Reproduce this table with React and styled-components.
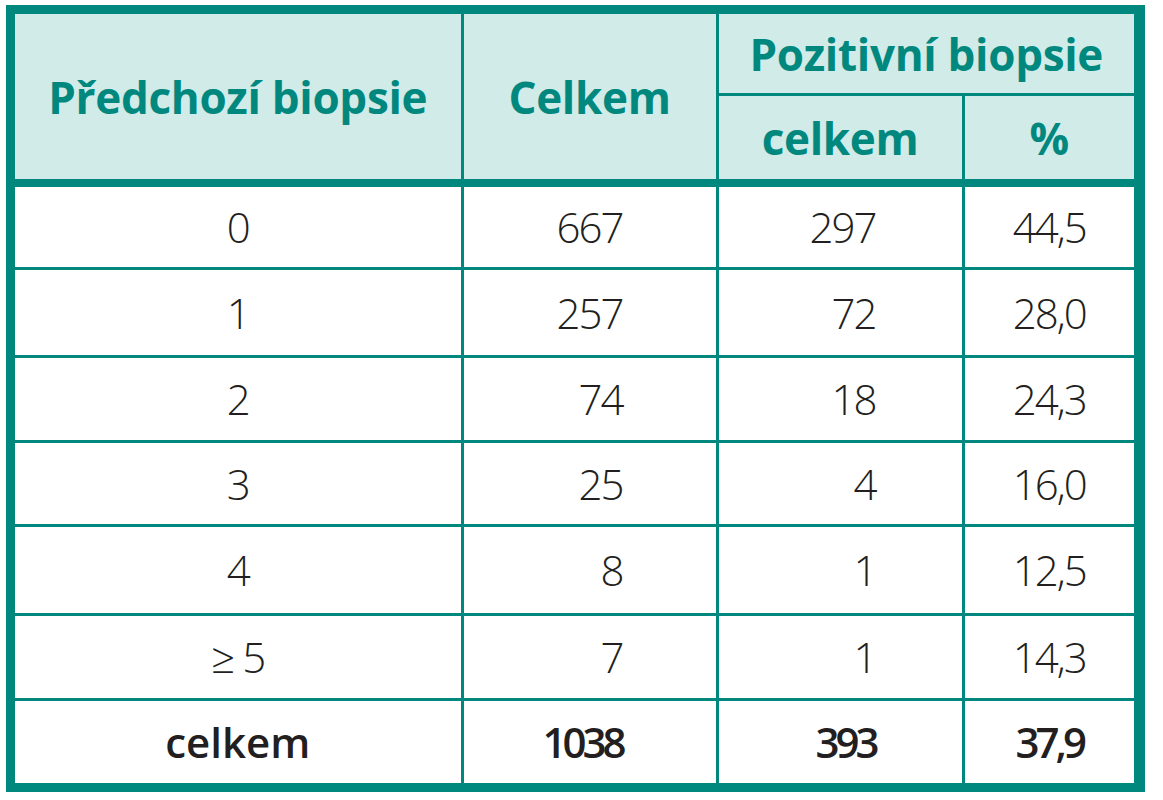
import styled, { createGlobalStyle } from 'styled-components';

const teal = '#00887f';
const tint = '#d0ebe8';
const ink = '#231f20';

const rows = [
  ['0', '667', '297', '44,5'],
  ['1', '257', '72', '28,0'],
  ['2', '74', '18', '24,3'],
  ['3', '25', '4', '16,0'],
  ['4', '8', '1', '12,5'],
  ['≥ 5', '7', '1', '14,3'],
];
// cell heights, collapsed half-borders are added on top of these
const rowHeights = [79.5, 85, 82, 81.5, 85.5, 82];

const GlobalStyle = createGlobalStyle`
  body {
    margin: 0;
    background: #fff;
    font-family: 'Open Sans', 'Liberation Sans', sans-serif;
  }
`;

const Frame = styled.div`
  box-sizing: content-box;
  width: 1119px;
  margin: 5px 0 0 6px;
  border: 9px solid ${teal};
  border-right-width: 11px;
`;

const Table = styled.table`
  width: 100%;
  table-layout: fixed;
  border-collapse: collapse;
  border-style: hidden;
`;

const Head = styled.th`
  background: ${tint};
  color: ${teal};
  font-weight: 700;
  font-size: 44px;
  letter-spacing: -0.3px;
  text-align: center;
  padding: 0;
  border: 3px solid ${teal};
  border-bottom-width: ${(p) => (p.last ? '8px' : '3px')};
  height: ${(p) => p.h}px;
`;

const Cell = styled.td`
  color: ${ink};
  font-size: 42px;
  font-weight: ${(p) => (p.bold ? 600 : 300)};
  letter-spacing: ${(p) => (p.word ? '0' : p.bold ? '-4px' : '-2px')};
  text-align: ${(p) => p.align || 'center'};
  padding: 0 ${(p) => p.pr || 0}px 0 0;
  border: 3px solid ${teal};
  height: ${(p) => p.h}px;
`;

function Row({ data, h, bold }) {
  return (
    <tr>
      <Cell h={h} bold={bold} word={bold}>{data[0]}</Cell>
      <Cell h={h} bold={bold} align="right" pr={93}>{data[1]}</Cell>
      <Cell h={h} bold={bold} align="right" pr={86}>{data[2]}</Cell>
      <Cell h={h} bold={bold}>{data[3]}</Cell>
    </tr>
  );
}

export default function App() {
  return (
    <>
      <GlobalStyle />
      <Frame>
        <Table>
          <colgroup>
            <col style={{ width: 447 }} />
            <col style={{ width: 255 }} />
            <col style={{ width: 246 }} />
            <col style={{ width: 171 }} />
          </colgroup>
          <thead>
            <tr>
              <Head rowSpan={2} last h={79}>Předchozí biopsie</Head>
              <Head rowSpan={2} last h={79}>Celkem</Head>
              <Head colSpan={2} h={79}>Pozitivní biopsie</Head>
            </tr>
            <tr>
              <Head last h={83}>celkem</Head>
              <Head last h={83}>%</Head>
            </tr>
          </thead>
          <tbody>
            {rows.map((r, i) => (
              <Row key={i} data={r} h={rowHeights[i]} />
            ))}
            <Row data={['celkem', '1038', '393', '37,9']} h={82.5} bold />
          </tbody>
        </Table>
      </Frame>
    </>
  );
}
